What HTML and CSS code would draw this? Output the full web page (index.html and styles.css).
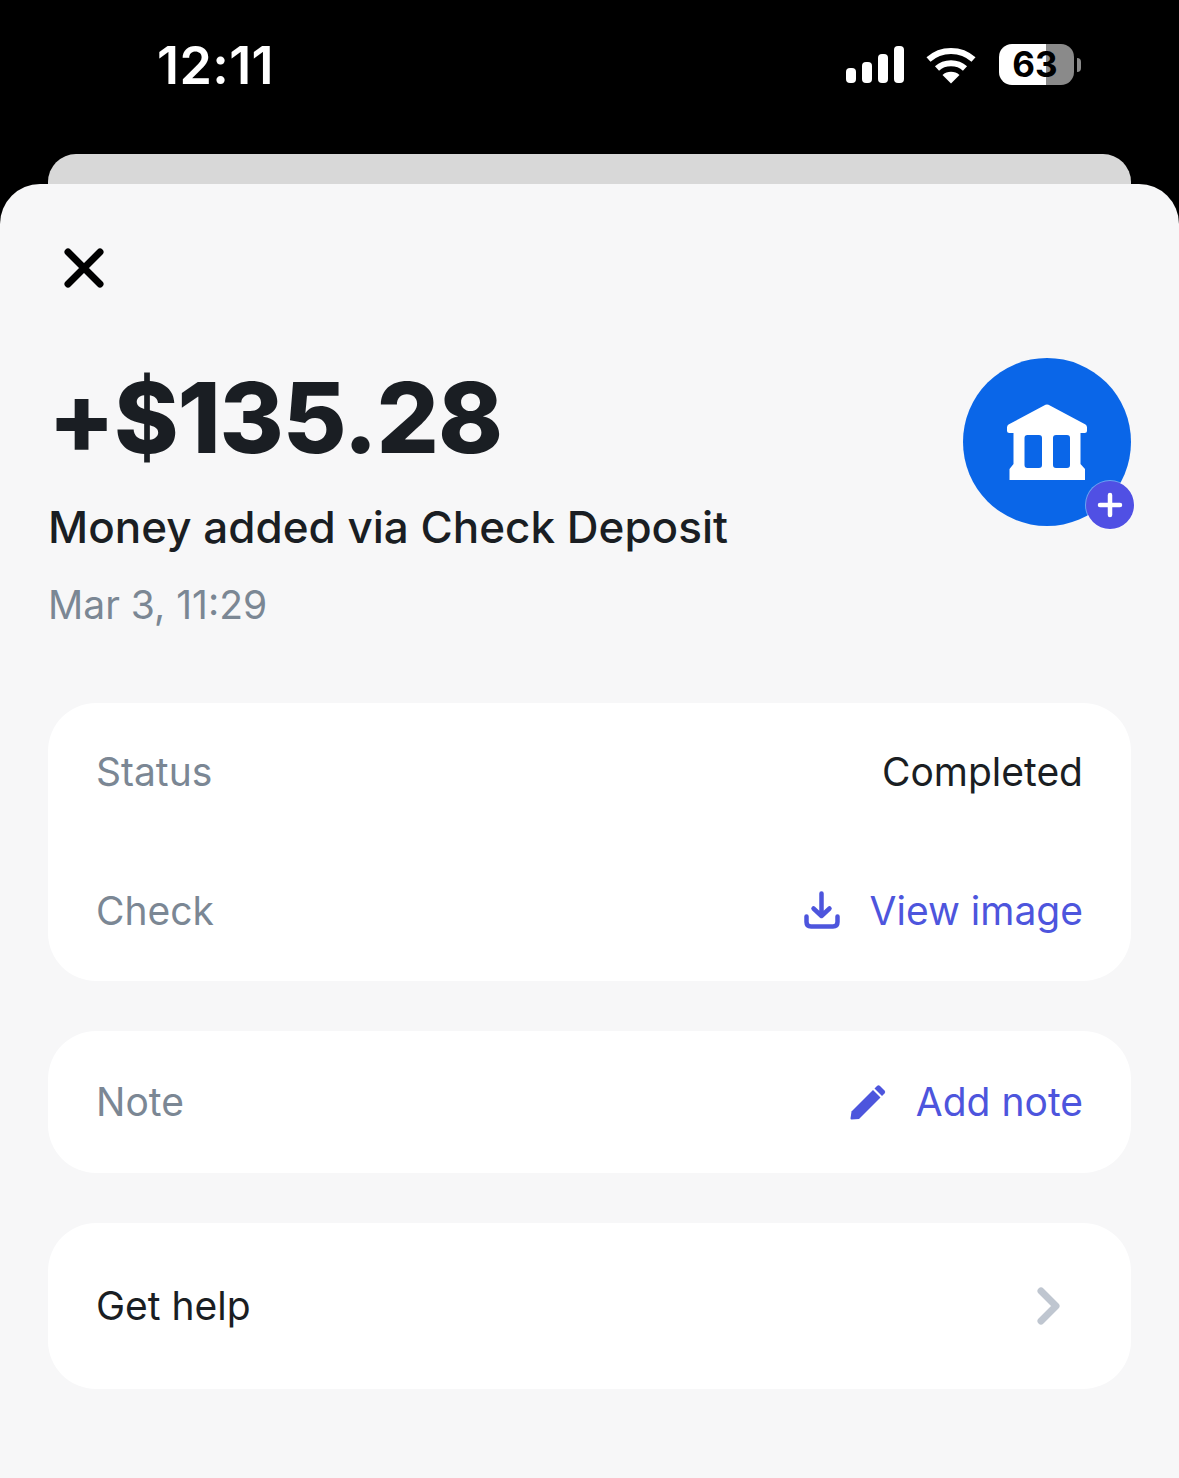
FILE: index.html
```html
<!DOCTYPE html>
<html lang="en">
<head>
<meta charset="utf-8">
<title>Transaction</title>
<link rel="stylesheet" href="styles.css">
</head>
<body>
<div class="phone">
  <header class="status-bar">
    <span class="time">12:11</span>
    <div class="status-icons">
      <svg class="signal" width="58" height="38" viewBox="0 0 58 38" fill="#fff">
        <rect x="0" y="22" width="10" height="15" rx="4"/>
        <rect x="16" y="16" width="10" height="21" rx="4"/>
        <rect x="32" y="8" width="10" height="29" rx="4"/>
        <rect x="48" y="0" width="10" height="37" rx="4"/>
      </svg>
      <svg class="wifi" width="50" height="38" viewBox="0 0 50 38" fill="none" stroke="#fff" stroke-width="6">
        <path d="M2.5 13.5C15 2 35 2 47.5 13.5"/>
        <path d="M11 22.5C18.500 15.500 31.500 15.500 39 22.500"/>
        <path d="M25 37.500L16.500 29C21 24.800 29 24.800 33.500 29Z" fill="#fff" stroke="none"/>
      </svg>
      <div class="battery">
        <div class="battery-body">
          <div class="battery-fill"></div>
          <div class="battery-rest"></div>
          <span class="battery-level">63</span>
        </div>
        <span class="battery-nub"></span>
      </div>
    </div>
  </header>
  <div class="peek"></div>
  <main class="sheet">
    <svg class="close" width="40" height="40" viewBox="0 0 40 40" fill="none" stroke="#000" stroke-width="7" stroke-linecap="round">
      <path d="M4 4L36 36M36 4L4 36"/>
    </svg>
    <section class="summary">
      <div class="summary-text">
        <h1 class="amount">+$135.28</h1>
        <p class="title">Money added via Check Deposit</p>
        <p class="date">Mar 3, 11:29</p>
      </div>
      <div class="avatar">
        <svg width="80" height="76" viewBox="0 0 80 76" fill="#fff">
          <path fill-rule="evenodd" d="M38.500 0.800Q40 0 41.500 0.800L78.500 20.500Q80 21.500 80 23.500V26.500Q80 29 77.500 29H73.500V60L78 65V76H2.500V65L6.500 60V29H2.500Q0 29 0 26.500V23.500Q0 21.500 1.500 20.500ZM20.500 31Q17.500 31 17.500 34V61Q17.500 64 20.500 64H32Q35 64 35 61V34Q35 31 32 31ZM49 31Q46 31 46 34V61Q46 64 49 64H60Q63 64 63 61V34Q63 31 60 31Z"/>
        </svg>
        <span class="avatar-badge">
          <svg width="26" height="26" viewBox="0 0 26 26" fill="none" stroke="#fff" stroke-width="4.500" stroke-linecap="round">
            <path d="M13 3V23M3 13H23"/>
          </svg>
        </span>
      </div>
    </section>
    <section class="card">
      <div class="row row-tall">
        <span class="label">Status</span>
        <span class="value">Completed</span>
      </div>
      <div class="row row-tall">
        <span class="label">Check</span>
        <span class="action">
          <svg width="36" height="38" viewBox="0 0 36 38" fill="none" stroke="#4d55dd" stroke-width="4.500" stroke-linecap="round" stroke-linejoin="round">
            <path d="M17.500 2.500V25M9.500 17.500L17.500 25L25.500 17.500"/>
            <path d="M2.500 25.500V31Q2.500 35.500 7 35.500H29Q33.500 35.500 33.500 31V25.500"/>
          </svg>
          View image
        </span>
      </div>
    </section>
    <section class="card">
      <div class="row row-note">
        <span class="label">Note</span>
        <span class="action">
          <svg width="36" height="36" viewBox="0 0 36 36" fill="#4d55dd">
            <path d="M1.500 27.500L23 6L30.500 13.500L9 35L1.500 35.500Q0.500 35.500 0.500 34.500Z"/>
            <path d="M24.500 4.500L27 2Q28.500 0.500 30 2L34.500 6.500Q36 8 34.500 9.500L32 12Z"/>
          </svg>
          Add note
        </span>
      </div>
    </section>
    <section class="card">
      <div class="row row-help">
        <span class="value">Get help</span>
        <svg class="chevron" width="24" height="38" viewBox="0 0 24 38" fill="none" stroke="#bfc6d0" stroke-width="7" stroke-linecap="round" stroke-linejoin="round">
          <path d="M4 4L19 19L4 34"/>
        </svg>
      </div>
    </section>
  </main>
</div>
</body>
</html>
```

FILE: styles.css
```css
* { box-sizing: border-box; }
html, body { margin: 0; height: 100%; }
body {
  background: #000;
  font-family: "Inter", "Liberation Sans", sans-serif;
  overflow: hidden;
}
.phone { height: 1478px; display: flex; flex-direction: column; }
.status-bar {
  height: 154px;
  flex: none;
  padding: 40px 98px 0 157px;
  display: flex;
  justify-content: space-between;
  align-items: flex-start;
  color: #fff;
}
.time { font-size: 52px; line-height: 52px; font-weight: 600; letter-spacing: 0.4px; }
.status-icons { display: flex; align-items: center; gap: 22px; height: 50px; }
.wifi { margin-right: 1px; }
.battery { display: flex; align-items: center; gap: 3px; margin-top: -1px; }
.battery-body {
  position: relative;
  width: 75px;
  height: 41px;
  display: flex;
}
.battery-fill { width: 47px; background: #fff; border-radius: 13px 0 0 13px; }
.battery-rest { flex: 1; background: #8a8a8a; border-radius: 0 13px 13px 0; }
.battery-level {
  position: absolute;
  inset: 0;
  padding-right: 3px;
  text-align: center;
  font-size: 35px;
  line-height: 41px;
  font-weight: 700;
  color: #000;
}
.battery-nub { width: 4px; height: 14px; background: #8a8a8a; border-radius: 0 4px 4px 0; }
.peek {
  height: 30px;
  flex: none;
  margin: 0 48px;
  background: #d8d8d8;
  border-radius: 28px 28px 0 0;
}
.sheet {
  flex: 1;
  background: #f7f7f8;
  border-radius: 40px 40px 0 0;
  padding: 64px 48px 0;
  display: flex;
  flex-direction: column;
}
.close { margin-left: 16px; flex: none; }
.summary {
  display: flex;
  justify-content: space-between;
  align-items: flex-start;
  margin-top: 70px;
  height: 345px;
  flex: none;
}
.amount {
  margin: 0;
  font-size: 98px;
  line-height: 120px;
  font-weight: 800;
  color: #1a1e23;
  letter-spacing: -1.2px;
}
.title {
  margin: 19px 0 0;
  font-size: 44px;
  line-height: 60px;
  font-weight: 500;
  color: #1a1e23;
}
.date {
  margin: 23px 0 0;
  font-size: 39px;
  line-height: 50px;
  color: #7b8794;
}
.avatar {
  position: relative;
  width: 168px;
  height: 168px;
  border-radius: 50%;
  background: #0a66e8;
  display: flex;
  align-items: center;
  justify-content: center;
}
.avatar-badge {
  position: absolute;
  right: -3px;
  bottom: -3px;
  width: 48px;
  height: 48px;
  border-radius: 50%;
  background: #5050e4;
  box-shadow: 0 0 0 1px rgba(255, 255, 255, 0.4);
  display: flex;
  align-items: center;
  justify-content: center;
}
.card {
  background: #fff;
  border-radius: 48px;
  margin-bottom: 50px;
  flex: none;
}
.row {
  display: flex;
  justify-content: space-between;
  align-items: center;
  padding: 0 48px;
  font-size: 39px;
}
.row-tall { height: 139px; padding-bottom: 3px; }
.row-note { height: 142px; padding-bottom: 1px; }
.row-help { height: 166px; padding-right: 70px; padding-bottom: 1px; }
.label { color: #7b8794; }
.value { color: #1a1e23; }
.action { display: flex; align-items: center; gap: 30px; color: #4d55dd; font-weight: 400; }
```
